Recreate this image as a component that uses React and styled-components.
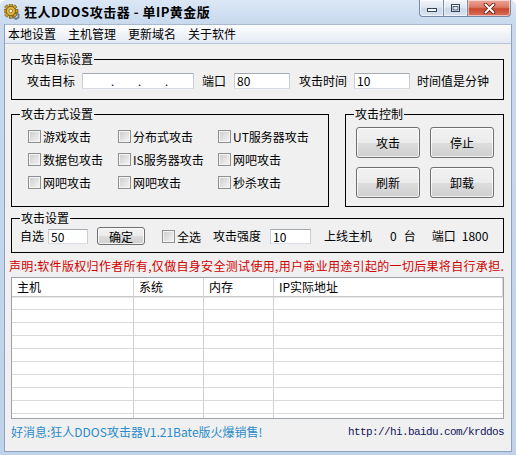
import React from "react";
import styled, { createGlobalStyle } from "styled-components";

const GlobalStyle = createGlobalStyle`
  html, body { margin: 0; padding: 0; background: #ffffff; }
  body {
    font-family: "Noto Sans CJK SC", "Noto Sans", sans-serif;
    font-size: 12px;
    color: #000;
  }
  * { box-sizing: border-box; }
`;

const Window = styled.div`
  width: 516px;
  height: 455px;
  background: linear-gradient(180deg, #dbe7f5 0px, #c8d9ee 24px, #bfd2ea 100%);
  border-radius: 6px 6px 0 0;
  display: flex;
  flex-direction: column;
  overflow: hidden;
`;

const TitleBar = styled.div`
  height: 24px;
  flex: none;
  display: flex;
  align-items: center;
  padding-left: 4px;
`;

const TitleText = styled.div`
  margin-left: 4px;
  font-size: 13px;
  font-weight: bold;
  line-height: 16px;
  color: #000;
  letter-spacing: 0.5px;
`;

const CaptionButtons = styled.div`
  display: flex;
  align-self: flex-start;
  margin-left: auto;
  margin-right: 5px;
`;

const CapBtn = styled.div`
  width: ${(p) => p.$w}px;
  height: 17px;
  display: flex;
  align-items: center;
  justify-content: center;
  border: 1px solid #7489a6;
  border-top: none;
  border-left: ${(p) => (p.$first ? "1px solid #7489a6" : "none")};
  border-radius: ${(p) => p.$r};
  background: ${(p) =>
    p.$close
      ? "linear-gradient(180deg, #eaa597 0%, #dc7a64 45%, #c9472f 55%, #d9705a 100%)"
      : "linear-gradient(180deg, #f3f6fa 0%, #dfe7f1 45%, #ccd9e9 55%, #dae4f0 100%)"};
  box-shadow: inset 0 0 0 1px rgba(255, 255, 255, 0.55);
`;

const Client = styled.div`
  flex: 1;
  margin: 0 4px 3px 4px;
  border: 1px solid #8ca2bf;
  border-top: none;
  background: #f0f0f0;
  display: flex;
  flex-direction: column;
`;

const MenuBar = styled.div`
  height: 20px;
  flex: none;
  display: flex;
  align-items: center;
  gap: 12px;
  padding-left: 3px;
  background: linear-gradient(180deg, #fbfcfe 0%, #eef2f8 60%, #e3e9f3 100%);
  border-top: 1px solid #a9b9d0;
  border-bottom: 1px solid #b9c6d8;
`;

const MenuItem = styled.span`
  font-size: 12px;
  line-height: 18px;
  color: #000;
`;

const Body = styled.div`
  flex: 1;
  display: flex;
  flex-direction: column;
  padding: 0 7px 0 6px;
`;

const Group = styled.div`
  position: relative;
  border: 1px solid #000;
  height: ${(p) => p.$h}px;
  width: ${(p) => (p.$w ? `${p.$w}px` : "auto")};
  margin-top: ${(p) => p.$mt || 0}px;
  flex: none;
`;

const GroupTitle = styled.span`
  position: absolute;
  top: -8px;
  left: 8px;
  padding: 0 1px;
  background: #f0f0f0;
  line-height: 14px;
  font-size: 12px;
`;

const FieldRow = styled.div`
  height: 100%;
  display: flex;
  align-items: center;
  padding-left: ${(p) => p.$pl}px;
  padding-top: ${(p) => p.$pt || 0}px;
`;

const Label = styled.span`
  margin-left: ${(p) => p.$ml || 0}px;
  font-size: 12px;
  line-height: 14px;
  white-space: nowrap;
  flex: none;
`;

const TextBox = styled.input`
  width: ${(p) => p.$w}px;
  height: ${(p) => p.$h || 16}px;
  margin: 0 0 0 ${(p) => p.$ml || 0}px;
  padding: 0 0 0 2px;
  border: 1px solid;
  border-color: #a3a9b2 #c9ced6 #d8dde4 #c9ced6;
  background: #fff;
  font-family: "Noto Sans CJK SC", "Noto Sans", sans-serif;
  font-size: 12px;
  color: #000;
  outline: none;
  flex: none;
`;

const IpBox = styled.div`
  width: ${(p) => p.$w}px;
  height: 16px;
  margin-left: ${(p) => p.$ml || 0}px;
  padding-left: 4px;
  border: 1px solid;
  border-color: #a3a9b2 #c9ced6 #d8dde4 #c9ced6;
  background: #fff;
  display: flex;
  align-items: flex-end;
  flex: none;
`;

const IpSeg = styled.span`
  width: 24px;
  height: 14px;
`;

const IpDot = styled.span`
  width: 3px;
  height: 14px;
  font-size: 11px;
  line-height: 14px;
  text-align: center;
`;

const MidRow = styled.div`
  display: flex;
  justify-content: space-between;
  margin-top: 14px;
`;

const CheckGrid = styled.div`
  display: grid;
  grid-template-columns: 90px 100px auto;
  grid-auto-rows: 23px;
  padding: 10px 0 0 16px;
`;

const CheckItem = styled.label`
  display: flex;
  align-items: center;
  margin-left: ${(p) => p.$ml || 0}px;
  flex: none;
`;

const CheckBox = styled.span`
  width: 13px;
  height: 13px;
  flex: none;
  margin-right: 2px;
  border: 1px solid #8e8f8f;
  background: linear-gradient(135deg, #cbcbcb 0%, #e3e3e3 55%, #f6f6f6 100%);
  box-shadow: inset 0 0 0 1px #f4f4f4;
`;

const ButtonGrid = styled.div`
  display: grid;
  grid-template-columns: 64px 64px;
  grid-auto-rows: 31px;
  column-gap: 10px;
  row-gap: 9px;
  padding: 12px 0 0 10px;
`;

const WinButton = styled.button`
  width: ${(p) => p.$w}px;
  height: ${(p) => p.$h}px;
  margin: 0 0 0 ${(p) => p.$ml || 0}px;
  padding: 0;
  border: 1px solid #707070;
  border-radius: 3px;
  background: linear-gradient(180deg, #f2f2f2 0%, #ebebeb 50%, #dddddd 51%, #cfcfcf 100%);
  box-shadow: inset 0 0 0 1px rgba(255, 255, 255, 0.75);
  font-family: "Noto Sans CJK SC", "Noto Sans", sans-serif;
  font-size: 12px;
  color: #000;
  flex: none;
`;

const Notice = styled.div`
  margin-top: 6px;
  margin-left: -2px;
  height: 14px;
  line-height: 14px;
  font-size: 12px;
  color: #d00000;
  white-space: nowrap;
  letter-spacing: 0.32px;
`;

const Table = styled.div`
  margin-top: 4px;
  height: 142px;
  border: 1px solid #9ca3ad;
  background: #fff;
  overflow: hidden;
  display: grid;
  grid-template-columns: 122px 70px 70px 1fr;
  grid-template-rows: 19px;
  grid-auto-rows: 13px;
  flex: none;
`;

const HeadCell = styled.div`
  border-right: 1px solid #d5d5d5;
  border-bottom: 1px solid #c8c8c8;
  box-shadow: 0 1px 0 #e6e6e6;
  padding-left: 5px;
  font-size: 12px;
  line-height: 18px;
  &:last-child { border-right: none; }
`;

const Cell = styled.div`
  border-right: ${(p) => (p.$last ? "none" : "1px solid #d0d0d0")};
  border-bottom: 1px solid #dadada;
`;

const StatusRow = styled.div`
  margin-top: 6px;
  height: 14px;
  display: flex;
  justify-content: space-between;
  align-items: center;
`;

const GoodNews = styled.span`
  font-size: 12px;
  line-height: 14px;
  color: #2a8ccb;
  white-space: nowrap;
`;

const Url = styled.span`
  font-family: "Liberation Mono", "DejaVu Sans Mono", monospace;
  font-size: 11px;
  letter-spacing: -0.6px;
  line-height: 14px;
  color: #15155e;
  white-space: nowrap;
`;

function GearIcon() {
  const teeth = [];
  for (let i = 0; i < 8; i++) {
    teeth.push(
      <rect key={i} x="5.2" y="-0.2" width="3.2" height="3.4" fill="#c79a2c" stroke="#6a4f12" strokeWidth="0.6"
        transform={`rotate(${i * 45} 6.8 7)`} />
    );
  }
  const small = [];
  for (let i = 0; i < 6; i++) {
    small.push(
      <rect key={i} x="11" y="8.6" width="2" height="2.4" fill="#8d9aab" stroke="#4b5563" strokeWidth="0.5"
        transform={`rotate(${i * 60} 12 12)`} />
    );
  }
  return (
    <svg width="16" height="16" viewBox="0 0 16 16">
      {small}
      <circle cx="12" cy="12" r="2.6" fill="#a9b5c3" stroke="#4b5563" strokeWidth="0.6" />
      <circle cx="12" cy="12" r="0.9" fill="#e9edf2" />
      {teeth}
      <circle cx="6.8" cy="7" r="4.6" fill="#e0b63e" stroke="#6a4f12" strokeWidth="0.7" />
      <circle cx="6.8" cy="7" r="1.8" fill="#fff3c8" stroke="#6a4f12" strokeWidth="0.6" />
    </svg>
  );
}

function MinGlyph() {
  return (
    <svg width="12" height="10" viewBox="0 0 12 10">
      <rect x="1.5" y="5.5" width="9" height="3" fill="#ffffff" stroke="#34445a" />
    </svg>
  );
}

function MaxGlyph() {
  return (
    <svg width="11" height="10" viewBox="0 0 11 10">
      <rect x="1.5" y="1.5" width="8" height="7" fill="#ffffff" stroke="#34445a" />
      <rect x="3" y="3.5" width="5" height="3.5" fill="#d9e3ef" stroke="#34445a" strokeWidth="0.8" />
    </svg>
  );
}

function CloseGlyph() {
  return (
    <svg width="13" height="11" viewBox="0 0 13 11">
      <path d="M2.5 1.5 L10.5 9.5 M10.5 1.5 L2.5 9.5" stroke="#5a1a10" strokeWidth="3.6" strokeLinecap="round" />
      <path d="M2.5 1.5 L10.5 9.5 M10.5 1.5 L2.5 9.5" stroke="#ffffff" strokeWidth="2" strokeLinecap="round" />
    </svg>
  );
}

const methods = [
  "游戏攻击", "分布式攻击", "UT服务器攻击",
  "数据包攻击", "IS服务器攻击", "网吧攻击",
  "网吧攻击", "网吧攻击", "秒杀攻击",
];

const controls = ["攻击", "停止", "刷新", "卸载"];
const headers = ["主机", "系统", "内存", "IP实际地址"];

export default function App() {
  const rows = [];
  for (let r = 0; r < 10; r++) {
    for (let c = 0; c < 4; c++) {
      rows.push(<Cell key={`${r}-${c}`} $last={c === 3} />);
    }
  }
  return (
    <>
      <GlobalStyle />
      <Window>
        <TitleBar>
          <GearIcon />
          <TitleText>狂人DDOS攻击器 - 单IP黄金版</TitleText>
          <CaptionButtons>
            <CapBtn $w={25} $first $r="0 0 0 4px"><MinGlyph /></CapBtn>
            <CapBtn $w={24} $r="0"><MaxGlyph /></CapBtn>
            <CapBtn $w={43} $close $r="0 0 4px 0"><CloseGlyph /></CapBtn>
          </CaptionButtons>
        </TitleBar>
        <Client>
          <MenuBar>
            <MenuItem>本地设置</MenuItem>
            <MenuItem>主机管理</MenuItem>
            <MenuItem>更新域名</MenuItem>
            <MenuItem>关于软件</MenuItem>
          </MenuBar>
          <Body>
            <Group $h={41} $mt={15}>
              <GroupTitle>攻击目标设置</GroupTitle>
              <FieldRow $pl={15} $pt={2}>
                <Label>攻击目标</Label>
                <IpBox $w={112} $ml={7}>
                  <IpSeg /><IpDot>.</IpDot><IpSeg /><IpDot>.</IpDot><IpSeg /><IpDot>.</IpDot><IpSeg />
                </IpBox>
                <Label $ml={8}>端口</Label>
                <TextBox $w={56} $ml={8} readOnly value="80" />
                <Label $ml={9}>攻击时间</Label>
                <TextBox $w={56} $ml={7} readOnly value="10" />
                <Label $ml={7}>时间值是分钟</Label>
              </FieldRow>
            </Group>
            <MidRow>
              <Group $h={93} $w={318}>
                <GroupTitle>攻击方式设置</GroupTitle>
                <CheckGrid>
                  {methods.map((m, i) => (
                    <CheckItem key={i}>
                      <CheckBox />
                      <span>{m}</span>
                    </CheckItem>
                  ))}
                </CheckGrid>
              </Group>
              <Group $h={93} $w={159}>
                <GroupTitle>攻击控制</GroupTitle>
                <ButtonGrid>
                  {controls.map((c) => (
                    <WinButton key={c} $w={64} $h={31}>{c}</WinButton>
                  ))}
                </ButtonGrid>
              </Group>
            </MidRow>
            <Group $h={35} $mt={11}>
              <GroupTitle>攻击设置</GroupTitle>
              <FieldRow $pl={8} $pt={1}>
                <Label>自选</Label>
                <TextBox $w={40} $h={15} $ml={4} readOnly value="50" />
                <WinButton $w={48} $h={18} $ml={9}>确定</WinButton>
                <CheckItem $ml={17}>
                  <CheckBox />
                  <span>全选</span>
                </CheckItem>
                <Label $ml={12}>攻击强度</Label>
                <TextBox $w={41} $h={15} $ml={9} readOnly value="10" />
                <Label $ml={13}>上线主机</Label>
                <Label $ml={18}>0</Label>
                <Label $ml={7}>台</Label>
                <Label $ml={16}>端口</Label>
                <Label $ml={6}>1800</Label>
              </FieldRow>
            </Group>
            <Notice>声明:软件版权归作者所有,仅做自身安全测试使用,用户商业用途引起的一切后果将自行承担.</Notice>
            <Table>
              {headers.map((h) => (
                <HeadCell key={h}>{h}</HeadCell>
              ))}
              {rows}
            </Table>
            <StatusRow>
              <GoodNews>好消息:狂人DDOS攻击器V1.21Bate版火爆销售!</GoodNews>
              <Url>http://hi.baidu.com/krddos</Url>
            </StatusRow>
          </Body>
        </Client>
      </Window>
    </>
  );
}
